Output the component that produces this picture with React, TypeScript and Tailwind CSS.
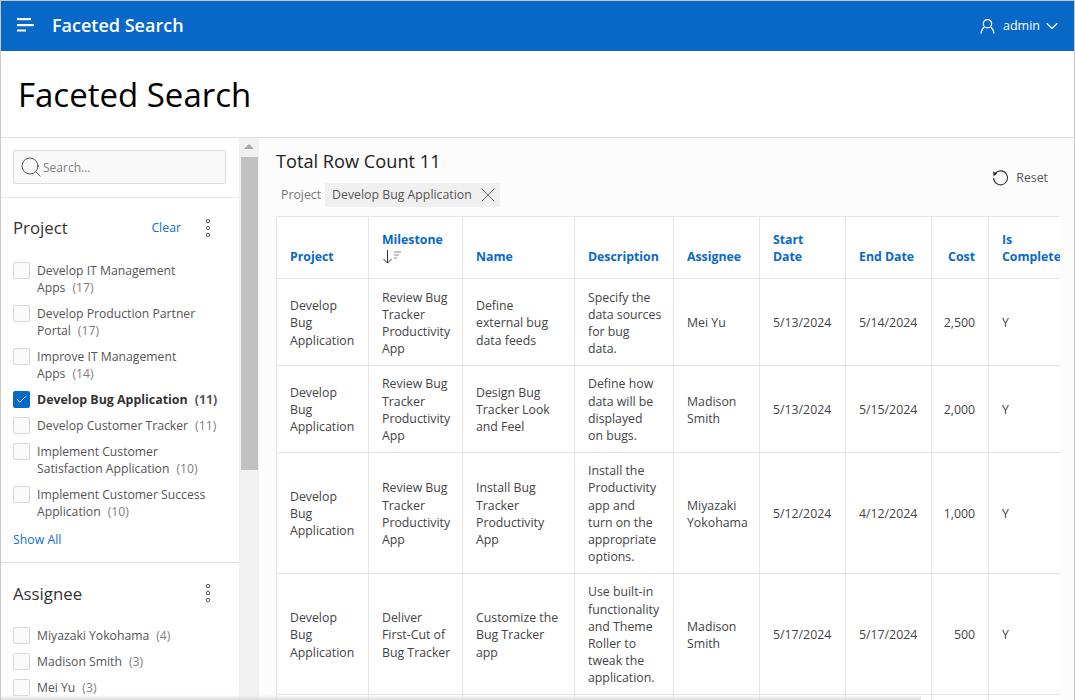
import { Check, ChevronDown, Search, X } from 'lucide-react';

const projects = [
  { lines: 'Develop IT Management\nApps', count: 17 },
  { lines: 'Develop Production Partner\nPortal', count: 17 },
  { lines: 'Improve IT Management\nApps', count: 14 },
  { lines: 'Develop Bug Application', count: 11, checked: true },
  { lines: 'Develop Customer Tracker', count: 11 },
  { lines: 'Implement Customer\nSatisfaction Application', count: 10 },
  { lines: 'Implement Customer Success\nApplication', count: 10 },
];

const assignees = [
  { lines: 'Miyazaki Yokohama', count: 4 },
  { lines: 'Madison Smith', count: 3 },
  { lines: 'Mei Yu', count: 3 },
];

// line breaks follow the column wrapping of the report
const rows = [
  ['Develop\nBug\nApplication', 'Review Bug\nTracker\nProductivity\nApp', 'Define\nexternal bug\ndata feeds', 'Specify the\ndata sources\nfor bug\ndata.', 'Mei Yu', '5/13/2024', '5/14/2024', '2,500', 'Y'],
  ['Develop\nBug\nApplication', 'Review Bug\nTracker\nProductivity\nApp', 'Design Bug\nTracker Look\nand Feel', 'Define how\ndata will be\ndisplayed\non bugs.', 'Madison\nSmith', '5/13/2024', '5/15/2024', '2,000', 'Y'],
  ['Develop\nBug\nApplication', 'Review Bug\nTracker\nProductivity\nApp', 'Install Bug\nTracker\nProductivity\nApp', 'Install the\nProductivity\napp and\nturn on the\nappropriate\noptions.', 'Miyazaki\nYokohama', '5/12/2024', '4/12/2024', '1,000', 'Y'],
  ['Develop\nBug\nApplication', 'Deliver\nFirst-Cut of\nBug Tracker', 'Customize the\nBug Tracker\napp', 'Use built-in\nfunctionality\nand Theme\nRoller to\ntweak the\napplication.', 'Madison\nSmith', '5/17/2024', '5/17/2024', '500', 'Y'],
];

const emptyRow = [0, 1, 2, 3, 4, 5, 6, 7, 8];

function FacetItem({ lines, count, checked }: { lines: string; count: number; checked?: boolean }) {
  return (
    <div className="flex items-start gap-[7px] py-[4.5px]">
      {checked ? (
        <span className="flex h-[17px] w-[17px] shrink-0 items-center justify-center rounded-[2px] bg-[#0868c8] text-white">
          <Check size={13} strokeWidth={1.5} />
        </span>
      ) : (
        <span className="h-[17px] w-[17px] shrink-0 rounded-[2px] border border-[#d8d8d8] bg-[#fafafa]" />
      )}
      <span
        className={`whitespace-pre leading-[17px] ${checked ? 'text-[12.4px] font-bold text-[#333]' : 'text-[12.2px] text-[#555]'}`}
      >
        {lines}
        <span className={`ml-[7px] ${checked ? 'text-[#555]' : 'text-[#808080]'}`}>({count})</span>
      </span>
    </div>
  );
}

function MoreDots({ className }: { className?: string }) {
  return (
    <svg className={className} width="6" height="18" viewBox="0 0 6 18" fill="none" stroke="#555" strokeWidth="1">
      <circle cx="3" cy="2" r="1.7" />
      <circle cx="3" cy="9" r="1.7" />
      <circle cx="3" cy="16" r="1.7" />
    </svg>
  );
}

function FacetHeader({ title, clear }: { title: string; clear?: boolean }) {
  return (
    <div className="flex h-[24px] items-center">
      <span className="text-[16.8px] text-[#333]">{title}</span>
      {clear && <span className="ml-auto text-[12.3px] text-[#0f6fd0]">Clear</span>}
      <MoreDots className={clear ? 'ml-[24px]' : 'ml-auto'} />
    </div>
  );
}

export default function App() {
  return (
    <div className="relative flex h-[700px] w-[1075px] flex-col overflow-hidden border border-b-0 border-[#c8c8c8] bg-white font-['Open_Sans',sans-serif]">
      {/* Header */}
      <header className="flex h-[50px] shrink-0 items-center bg-[#0868c8] pl-[16px] pr-[12px] text-white">
        <svg className="mb-[2px]" width="18" height="14" viewBox="0 0 18 14" fill="white">
          <rect x="0" y="0" width="14" height="2.2" />
          <rect x="0" y="6" width="17" height="2.2" />
          <rect x="0" y="11.5" width="9" height="2" />
        </svg>
        <span className="mb-[2px] ml-[17px] text-[18px] font-semibold">Faceted Search</span>
        <svg className="ml-auto" width="15" height="17" viewBox="0 0 16 17" fill="none" stroke="white" strokeWidth="1.3">
          <circle cx="8" cy="5.5" r="4.4" />
          <path d="M4.8 9C3 10.1 1.6 12.5 1 16M11.2 9C13 10.1 14.4 12.5 15 16" />
        </svg>
        <span className="ml-[8px] text-[12.5px]">admin</span>
        <ChevronDown size={20} strokeWidth={1.3} className="ml-[2px]" />
      </header>

      {/* Title bar */}
      <div className="flex h-[87px] shrink-0 items-center border-b border-[#e0e0e0] pl-[17px] pt-[2px]">
        <h1 className="text-[33px] text-black">Faceted Search</h1>
      </div>

      <div className="flex min-h-0 flex-1">
        {/* Facets */}
        <aside className="w-[238px] shrink-0 overflow-hidden">
          <div className="border-b border-[#e8e8e8] pb-[13px] pl-[12px] pr-[13px] pt-[12px]">
            <div className="flex h-[34px] items-center rounded-[2px] border border-[#dcdcdc] bg-[#f9f9f9] pl-[5px]">
              <Search size={24} strokeWidth={0.9} className="text-[#444]" />
              <span className="pt-px text-[12px] text-[#808080]">Search...</span>
            </div>
          </div>
          <div className="border-b border-[#e0e0e0] pb-[13px] pl-[12px] pr-[28px] pt-[18px]">
            <FacetHeader title="Project" clear />
            <div className="mt-[17px]">
              {projects.map((p) => (
                <FacetItem key={p.lines} {...p} />
              ))}
            </div>
            <div className="mt-[7px] text-[12.3px] text-[#0f6fd0]">Show All</div>
          </div>
          <div className="pl-[12px] pr-[28px] pt-[18px]">
            <FacetHeader title="Assignee" />
            <div className="mt-[17px]">
              {assignees.map((p) => (
                <FacetItem key={p.lines} {...p} />
              ))}
            </div>
          </div>
        </aside>

        {/* Scrollbar */}
        <div className="flex w-[20px] shrink-0 flex-col items-center bg-[#f1f1f1]">
          <div className="mt-[6px] h-0 w-0 border-x-[5px] border-b-[5px] border-x-transparent border-b-[#a8a8a8]" />
          <div className="mt-[8px] h-[313px] w-[17px] bg-[#c1c1c1]" />
        </div>

        {/* Results */}
        <main className="min-w-0 flex-1 bg-[#fcfcfc] pl-[17px] pr-[14px]">
          <div className="flex items-start">
            <div>
              <div className="mt-[11px] text-[18.2px] font-medium leading-[24px] text-[#222]">Total Row Count 11</div>
              <div className="mt-[10px] flex items-center pl-[5px]">
                <span className="text-[12.3px] text-[#777]">Project</span>
                <span className="ml-[4px] flex h-[24px] items-center rounded-[2px] bg-[#f0f0f0] pl-[7px] text-[12.3px] text-[#555]">
                  Develop Bug Application
                  <X size={24} strokeWidth={0.8} className="ml-[4px] text-[#444]" />
                </span>
              </div>
            </div>
            <div className="ml-auto mr-[12px] mt-[31px] flex items-center gap-[7px]">
              <svg width="17" height="17" viewBox="0 0 17 17" fill="none" stroke="#333" strokeWidth="1.1">
                <path d="M3.2 3.4A7 7 0 1 1 1.6 8" />
                <path d="M1 1.4 5.4 3.6 1.6 6.2Z" fill="#333" stroke="none" />
              </svg>
              <span className="text-[12.3px] text-[#555]">Reset</span>
            </div>
          </div>

          <div className="mt-[9px] overflow-hidden rounded-t-[2px] bg-white">
            <table className="w-[784px] table-fixed border-collapse border border-[#e4e4e4] text-[12.3px] leading-[17.2px] text-[#444]">
              <thead>
                <tr className="h-[62px] text-left align-bottom font-bold text-[#0868c8]">
                  <th className="w-[92px] border border-[#e4e4e4] pb-[13px] pl-[13px]">Project</th>
                  <th className="w-[94px] border border-[#e4e4e4] pb-[13px] pl-[13px]">
                    Milestone
                    <svg className="block" width="24" height="17" viewBox="0 0 24 17" fill="none" stroke="#333" strokeWidth="1">
                      <path d="M5.5 2v13M1.5 11l4 4 4-4" />
                      <path d="M12 4h7M12 7h5M12 10h3" stroke="#888" />
                    </svg>
                  </th>
                  <th className="w-[112px] border border-[#e4e4e4] pb-[13px] pl-[13px]">Name</th>
                  <th className="w-[99px] border border-[#e4e4e4] pb-[13px] pl-[13px]">Description</th>
                  <th className="w-[86px] border border-[#e4e4e4] pb-[13px] pl-[13px]">Assignee</th>
                  <th className="w-[86px] border border-[#e4e4e4] pb-[13px] pl-[13px]">
                    Start
                    <br />
                    Date
                  </th>
                  <th className="w-[86px] border border-[#e4e4e4] pb-[13px] pl-[13px]">End Date</th>
                  <th className="w-[57px] border border-[#e4e4e4] pb-[13px] pr-[13px] text-right">Cost</th>
                  <th className="w-[72px] overflow-hidden border border-[#e4e4e4] pb-[13px] pl-[13px]">
                    Is
                    <br />
                    Complete
                  </th>
                </tr>
              </thead>
              <tbody>
                {rows.map((row, i) => (
                  <tr key={i}>
                    {row.map((cell, j) => (
                      <td
                        key={j}
                        className={`whitespace-pre border border-[#e4e4e4] pb-[7.5px] pt-[9.5px] ${
                          j === 7 ? 'pr-[13px] text-right' : 'pl-[13px]'
                        }`}
                      >
                        {cell}
                      </td>
                    ))}
                  </tr>
                ))}
                <tr className="h-[40px]">
                  {emptyRow.map((j) => (
                    <td key={j} className="border border-[#e4e4e4]" />
                  ))}
                </tr>
              </tbody>
            </table>
          </div>
        </main>
      </div>

      {/* Bottom fade */}
      <div className="absolute bottom-0 left-0 h-[5px] w-[920px] bg-gradient-to-t from-[#dcdcdc] to-transparent" />
    </div>
  );
}
